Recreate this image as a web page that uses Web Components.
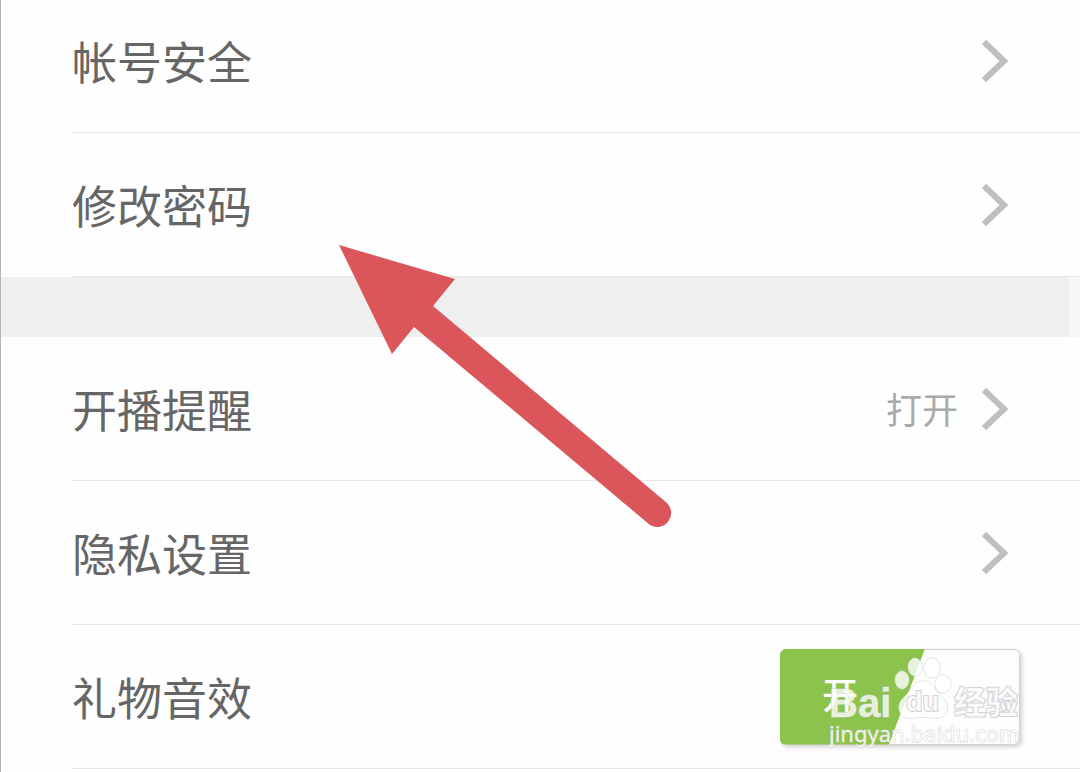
<!DOCTYPE html>
<html lang="zh-CN">
<head>
<meta charset="utf-8">
<meta name="viewport" content="width=device-width, initial-scale=1">
<title>设置</title>
<style>
  :root {
    --color-text: #666;
    --color-muted: #aaa;
    --color-line: #e6e6e6;
    --color-on: #8bc34c;
    --color-arrow: #db565b;
    --font-primary: "Noto Sans CJK SC", "Noto Sans", sans-serif;
  }

  body {
    margin: 0;
    background: #fefefe;
    overflow: hidden;
  }
</style>
</head>
<body>
<settings-page>
  <settings-group>
    <settings-link href="#security">帐号安全</settings-link>
    <settings-link href="#password">修改密码</settings-link>
  </settings-group>
  <settings-group>
    <settings-link href="#live" value="打开">开播提醒</settings-link>
    <settings-link href="#privacy">隐私设置</settings-link>
    <settings-toggle state="开">礼物音效</settings-toggle>
  </settings-group>
  <pointer-arrow slot="overlay"></pointer-arrow>
  <site-watermark slot="overlay"></site-watermark>
</settings-page>

<script>
class SettingsPage extends HTMLElement {
  constructor() {
    super();
    this.attachShadow({ mode: "open" });
  }

  connectedCallback() {
    this.shadowRoot.innerHTML = `
      <style>
        :host {
          display: block;
          position: relative;
          box-sizing: border-box;
          height: 100vh;
          overflow: hidden;
          border-left: 1px solid #b4b4b4;
          font-family: var(--font-primary);
          color: var(--color-text);
        }

        /* the list is scrolled a little, the first row is cut */
        main {
          display: flex;
          flex-direction: column;
          gap: 60px;
          margin-top: -11px;
          background: linear-gradient(to left, #f6f6f6 11px, #efefef 11px);
        }
      </style>
      <main><slot></slot></main>
      <slot name="overlay"></slot>
    `;
  }
}

class SettingsGroup extends HTMLElement {
  constructor() {
    super();
    this.attachShadow({ mode: "open" });
  }

  connectedCallback() {
    this.shadowRoot.innerHTML = `
      <style>
        :host {
          display: flex;
          flex-direction: column;
          padding-left: 71px;
          background: #fefefe;
        }
      </style>
      <slot></slot>
    `;
  }
}

const rowStyles = `
  :host {
    display: block;
    border-bottom: 1px solid var(--color-line);
    font-size: 45px;
    line-height: 63px;
  }

  .row {
    display: flex;
    align-items: center;
    min-height: 143px;
    padding-right: 60px;
    color: inherit;
    text-decoration: none;
  }

  .label {
    flex: 1;
  }
`;

class SettingsLink extends HTMLElement {
  constructor() {
    super();
    this.attachShadow({ mode: "open" });
  }

  connectedCallback() {
    const value = this.getAttribute("value") || "";
    this.shadowRoot.innerHTML = `
      <style>
        ${rowStyles}

        .value {
          font-size: 36px;
          color: var(--color-muted);
        }

        svg {
          display: block;
          margin-left: 14px;
        }
      </style>
      <a class="row" href="${this.getAttribute("href")}">
        <span class="label"><slot></slot></span>
        ${value ? `<span class="value">${value}</span>` : ""}
        <svg width="48" height="48" viewBox="0 0 48 48" fill="none" stroke="#bfbfbf" stroke-width="6" aria-hidden="true">
          <path d="M12 5L32 24L12 43"/>
        </svg>
      </a>
    `;
  }
}

class SettingsToggle extends HTMLElement {
  constructor() {
    super();
    this.attachShadow({ mode: "open" });
  }

  connectedCallback() {
    this.shadowRoot.innerHTML = `
      <style>
        ${rowStyles}

        .switch {
          display: grid;
          width: 240px;
          height: 96px;
          border-radius: 6px;
          box-shadow: 2px 2px 4px #d0d0d0;
        }

        .switch > * {
          grid-area: 1 / 1;
        }

        input {
          appearance: none;
          box-sizing: border-box;
          width: 100%;
          height: 100%;
          margin: 0;
          border: 1px solid #d0d0d0;
          border-radius: 6px;
          background: #fefefe;
        }

        .state {
          display: flex;
          align-items: center;
          padding-left: 42px;
          padding-bottom: 6px;
          border-radius: 6px;
          background: var(--color-on);
          clip-path: polygon(0 0, 145px 0, 109px 100%, 0 100%);
          color: #fff;
          font-size: 36px;
          font-weight: 500;
          pointer-events: none;
        }

        input:not(:checked) + .state {
          visibility: hidden;
        }
      </style>
      <div class="row">
        <label class="label" for="toggle"><slot></slot></label>
        <span class="switch">
          <input id="toggle" type="checkbox" role="switch" checked>
          <span class="state">${this.getAttribute("state")}</span>
        </span>
      </div>
    `;
  }
}

class PointerArrow extends HTMLElement {
  constructor() {
    super();
    this.attachShadow({ mode: "open" });
  }

  connectedCallback() {
    this.shadowRoot.innerHTML = `
      <style>
        :host {
          position: absolute;
          top: 240px;
          left: 329px;
          pointer-events: none;
        }

        svg {
          display: block;
        }
      </style>
      <svg width="350" height="300" viewBox="330 240 350 300" fill="var(--color-arrow)" aria-hidden="true">
        <path d="M339 245L455 279L433 306L667 503A14 14 0 0 1 650 525L414 327L392 354Z"/>
      </svg>
    `;
  }
}

class SiteWatermark extends HTMLElement {
  constructor() {
    super();
    this.attachShadow({ mode: "open" });
  }

  connectedCallback() {
    this.shadowRoot.innerHTML = `
      <style>
        :host {
          position: absolute;
          right: 50px;
          bottom: 12px;
          pointer-events: none;
        }

        svg {
          display: block;
          fill: #fff;
          fill-opacity: 0.8;
          stroke: #c8c8c8;
          stroke-opacity: 0.8;
          stroke-width: 1px;
          paint-order: stroke;
        }

        .brand {
          font: bold 40px "Liberation Sans", sans-serif;
        }

        .du {
          font: bold 27px "Liberation Sans", sans-serif;
          stroke-width: 2px;
        }

        .name {
          font: bold 32px "Noto Sans CJK SC", sans-serif;
          stroke-width: 2px;
        }

        .site {
          font: 22px "Noto Sans", sans-serif;
        }
      </style>
      <svg width="210" height="110" viewBox="820 650 210 110">
        <ellipse cx="902" cy="680" rx="7" ry="9"/>
        <ellipse cx="915" cy="667" rx="7" ry="9"/>
        <ellipse cx="932" cy="668" rx="8" ry="10"/>
        <ellipse cx="943" cy="684" rx="8" ry="9"/>
        <path d="M923 681C914 681 912 688 908 693C903 698 898 702 899 709C900 717 908 719 914 718C920 717 926 717 932 718C939 719 946 717 947 710C949 702 942 697 937 692C933 687 932 681 923 681Z"/>
        <text class="brand" x="829" y="717">Bai</text>
        <text class="du" x="906" y="711">du</text>
        <text class="name" x="954" y="714">经验</text>
        <text class="site" x="829" y="742">jingyan.baidu.com</text>
      </svg>
    `;
  }
}

customElements.define("settings-page", SettingsPage);
customElements.define("settings-group", SettingsGroup);
customElements.define("settings-link", SettingsLink);
customElements.define("settings-toggle", SettingsToggle);
customElements.define("pointer-arrow", PointerArrow);
customElements.define("site-watermark", SiteWatermark);
</script>
</body>
</html>
